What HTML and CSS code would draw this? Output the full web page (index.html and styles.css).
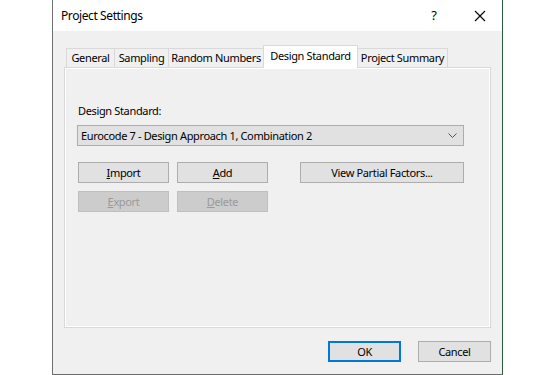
FILE: index.html
```html
<!DOCTYPE html>
<html>
<head>
<meta charset="utf-8">
<link rel="stylesheet" href="styles.css">
</head>
<body>
<div class="window">
  <div class="titlebar">
    <span class="title">Project Settings</span>
    <span class="help">?</span>
    <span class="close">
      <svg width="12" height="12" viewBox="0 0 12 12"><path d="M1 1 L11 11 M11 1 L1 11" stroke="#000" stroke-width="1.1" fill="none"/></svg>
    </span>
  </div>
  <div class="body">
    <div class="tabs">
      <div class="tab tab-general">General</div>
      <div class="tab tab-sampling">Sampling</div>
      <div class="tab tab-random">Random Numbers</div>
      <div class="tab tab-design active">Design Standard</div>
      <div class="tab tab-summary">Project Summary</div>
    </div>
    <div class="panel">
      <div class="label">Design Standard:</div>
      <div class="select">
        <span>Eurocode 7 - Design Approach 1, Combination 2</span>
        <svg width="9" height="6" viewBox="0 0 9 6"><path d="M0.5 0.5 L4.5 4.5 L8.5 0.5" stroke="#555" stroke-width="1" fill="none"/></svg>
      </div>
      <div class="actions">
        <div class="btn-col">
          <div class="btn"><u>I</u>mport</div>
          <div class="btn"><u>A</u>dd</div>
          <div class="btn disabled"><u>E</u>xport</div>
          <div class="btn disabled"><u>D</u>elete</div>
        </div>
        <div class="btn wide">View Partial Factors...</div>
      </div>
    </div>
    <div class="footer">
      <div class="btn dlg default">OK</div>
      <div class="btn dlg">Cancel</div>
    </div>
  </div>
</div>
</body>
</html>
```
FILE: styles.css
```css
* { box-sizing: border-box; }
html, body { margin: 0; padding: 0; background: #fff; }
body {
  font-family: "Noto Sans", "Liberation Sans", sans-serif;
  font-size: 11px;
  letter-spacing: -0.35px;
  color: #000;
}
.window {
  margin-left: 52px;
  width: 451px;
  height: 375px;
  border-left: 1px solid #707070;
  border-right: 1px solid #2c5a3e;
  border-bottom: 1px solid #6b6b6b;
  display: flex;
  flex-direction: column;
}
.titlebar {
  height: 31px;
  background: #fff;
  display: flex;
  align-items: center;
  padding-left: 8px;
}
.title { flex: 1; font-size: 12px; letter-spacing: -0.4px; padding-bottom: 1px; }
.help { width: 20px; text-align: center; font-size: 13px; margin-right: 26px; padding-bottom: 2px; }
.close { width: 20px; display: flex; justify-content: center; margin-right: 12px; }
.body {
  flex: 1;
  background: #f0f0f0;
  padding: 14px 11px 0 11px;
  display: flex;
  flex-direction: column;
}
.tabs {
  display: flex;
  align-items: flex-end;
  padding-left: 2px;
  height: 22px;
}
.tab {
  flex: none;
  white-space: nowrap;
  height: 19px;
  border: 1px solid #d9d9d9;
  border-bottom: none;
  margin-right: -1px;
  text-align: center;
  line-height: 18px;
  background: #f0f0f0;
}
.tab-general { width: 49px; }
.tab-sampling { width: 55px; }
.tab-random { width: 96px; }
.tab-design { width: 95px; }
.tab-summary { width: 91px; }
.tab.active {
  background: #fff;
  position: relative;
  z-index: 1;
  margin-bottom: -1px;
  height: 23px;
  line-height: 19px;
}
.panel {
  height: 261px;
  border: 1px solid #d9d9d9;
  box-shadow: inset 1px 1px 0 #fff, inset -1px -1px 0 #fff;
  background: #f0f0f0;
  padding: 35px 26px 0 12px;
}
.label { line-height: 16px; margin-left: 1px; }
.select {
  margin-top: 6px;
  height: 21px;
  background: #e1e1e1;
  border: 1px solid #adadad;
  display: flex;
  align-items: center;
  justify-content: space-between;
  padding: 0 6px 0 3px;
}
.select svg { margin-top: 1px; }
.actions {
  margin-top: 16px;
  display: flex;
  justify-content: space-between;
  align-items: flex-start;
  padding-left: 1px;
}
.btn-col {
  display: grid;
  grid-template-columns: 91px 91px;
  column-gap: 8px;
  row-gap: 8px;
}
.btn {
  height: 21px;
  background: #e1e1e1;
  border: 1px solid #adadad;
  display: flex;
  align-items: center;
  justify-content: center;
  padding-bottom: 1px;
  white-space: nowrap;
}
.btn.disabled {
  background: #cccccc;
  border-color: #bfbfbf;
  color: #9a9a9a;
}
.btn.wide { width: 164px; }
.footer {
  display: flex;
  justify-content: flex-end;
  gap: 17px;
  padding-top: 13px;
}
.btn.dlg { width: 73px; }
.btn.default { border: 2px solid #0078d7; }
```
